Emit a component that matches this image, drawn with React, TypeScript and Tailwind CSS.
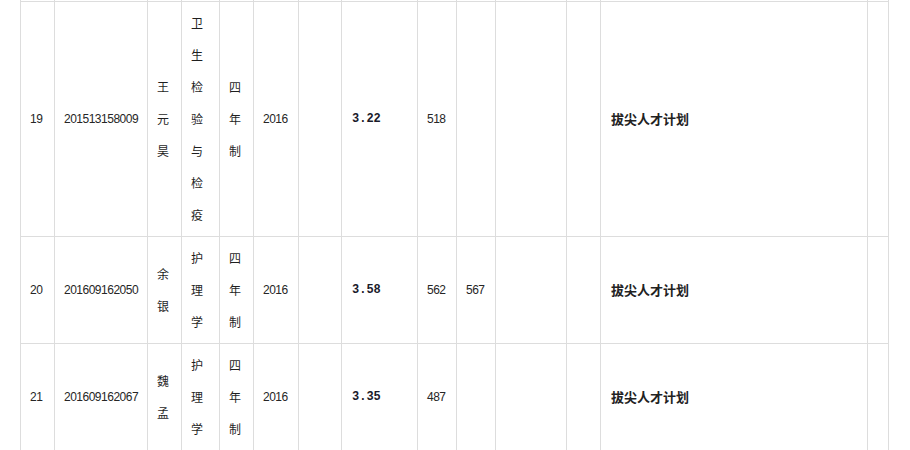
import React from "react";

type Row = {
  no: string;
  id: string;
  name: string;
  major: string;
  len: string;
  year: string;
  gpa: string;
  s1: string;
  s2: string;
  plan: string;
};

const rows: Row[] = [
  { no: "19", id: "201513158009", name: "王元昊", major: "卫生检验与检疫", len: "四年制", year: "2016", gpa: "3.22", s1: "518", s2: "", plan: "拔尖人才计划" },
  { no: "20", id: "201609162050", name: "余银", major: "护理学", len: "四年制", year: "2016", gpa: "3.58", s1: "562", s2: "567", plan: "拔尖人才计划" },
  { no: "21", id: "201609162067", name: "魏孟", major: "护理学", len: "四年制", year: "2016", gpa: "3.35", s1: "487", s2: "", plan: "拔尖人才计划" },
];

const widths = [34, 93, 34, 38, 34, 45, 43, 76, 39, 39, 71, 34, 267, 21];

const td = "border border-[#dddddd] px-[9px] py-[5px] align-middle text-left";
const cjk = "font-['Noto_Sans_CJK_SC',sans-serif] tracking-normal text-[#1f1f1f]";

export default function App() {
  return (
    <div className="h-[450px] w-[910px] overflow-hidden bg-white">
      <table
        className="ml-[20px] mt-[-10px] table-fixed border-collapse font-['Liberation_Sans','Noto_Sans_CJK_SC',sans-serif] text-[12px] leading-[32px] text-[#262626] tracking-[-0.5px]"
        style={{ width: 869 }}
      >
        <colgroup>
          {widths.map((w, i) => (
            <col key={i} style={{ width: w }} />
          ))}
        </colgroup>
        <tbody>
          <tr>
            {widths.map((_, i) => (
              <td key={i} className="h-[11px] border border-[#dddddd] p-0" />
            ))}
          </tr>
          {rows.map((r) => (
            <tr key={r.no}>
              <td className={td}>{r.no}</td>
              <td className={td}>{r.id}</td>
              <td className={`${td} ${cjk}`}>{r.name}</td>
              <td className={`${td} ${cjk}`}>{r.major}</td>
              <td className={`${td} ${cjk}`}>{r.len}</td>
              <td className={td}>{r.year}</td>
              <td className={td}></td>
              <td className={`${td} pl-[10px] font-['Liberation_Mono',monospace] font-bold tracking-normal text-[#1a1a2a]`}>{r.gpa}</td>
              <td className={td}>{r.s1}</td>
              <td className={td}>{r.s2}</td>
              <td className={td}></td>
              <td className={td}></td>
              <td className={`${td} pl-[10px] font-['Noto_Sans_CJK_SC',sans-serif] text-[13px] font-bold tracking-normal text-[#222222]`}>{r.plan}</td>
              <td className={td}></td>
            </tr>
          ))}
        </tbody>
      </table>
    </div>
  );
}
